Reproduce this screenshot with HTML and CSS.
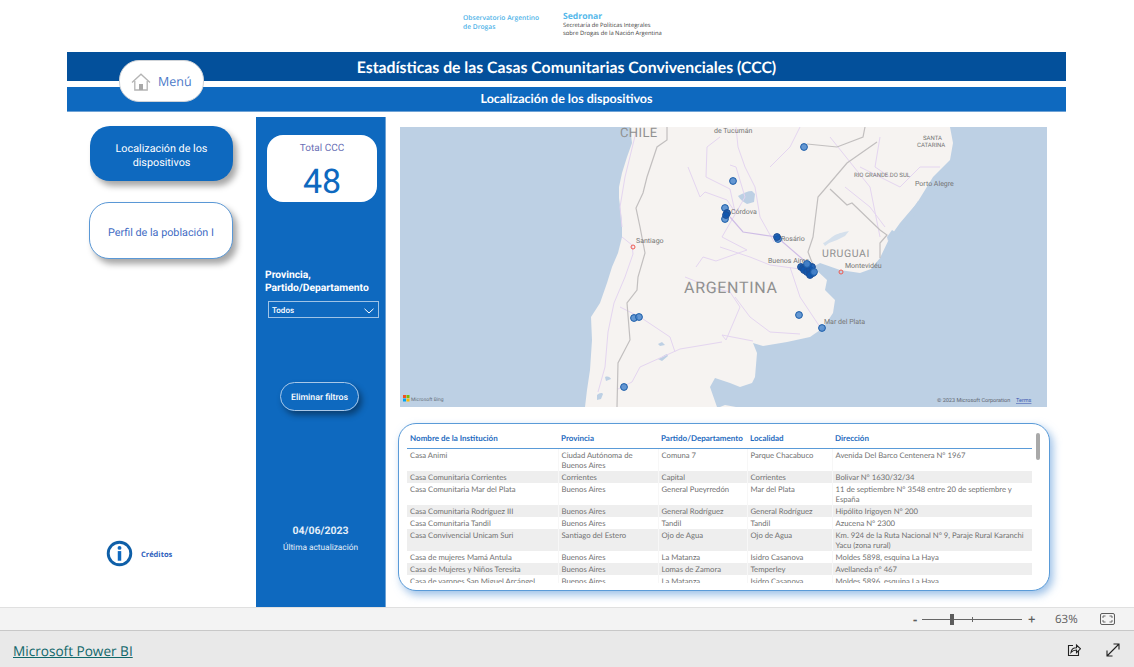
FILE: index.html
```html
<!DOCTYPE html>
<html lang="es">
<head>
<meta charset="utf-8">
<title>Estadísticas de las Casas Comunitarias Convivenciales (CCC)</title>
<link rel="stylesheet" href="styles.css">
</head>
<body>
<div class="page">
  <div class="canvas">
    <header class="logos">
      <div class="obs">Observatorio Argentino<br>de Drogas</div>
      <div class="sed">
        <div class="sed-name">Sedronar</div>
        <div class="sed-desc">Secretaría de Políticas Integrales<br>sobre Drogas de la Nación Argentina</div>
      </div>
    </header>
    <div class="title-bar">Estadísticas de las Casas Comunitarias Convivenciales (CCC)</div>
    <div class="sub-bar">Localización de los dispositivos</div>
    <a class="menu-btn">
      <svg class="home-icon" viewBox="0 0 20 18" width="20" height="18">
        <path d="M1 9.500 10 1.200l9 8.300" fill="none" stroke="#b4b4b4" stroke-width="1.300"/>
        <path d="M3.800 8v9h12.400V8" fill="none" stroke="#b4b4b4" stroke-width="1.300"/>
        <rect x="8" y="11" width="4" height="6" fill="#a8a8a8"/>
      </svg>
      <span>Menú</span>
    </a>
    <div class="main">
      <nav class="left">
        <div class="nav-btn active">Localización de los<br>dispositivos</div>
        <div class="nav-btn second">Perfil de la población I</div>
        <div class="credits">
          <svg viewBox="0 0 28 28" width="27" height="27">
            <circle cx="14" cy="14" r="11.700" fill="#fff" stroke="#0f5fa8" stroke-width="3"/>
            <circle cx="14" cy="8.200" r="2" fill="#0f69bf"/>
            <rect x="12.200" y="11.500" width="3.600" height="10" fill="#0f69bf"/>
          </svg>
          <span>Créditos</span>
        </div>
      </nav>
      <aside class="side">
        <div class="kpi">
          <div class="kpi-label">Total CCC</div>
          <div class="kpi-value">48</div>
        </div>
        <div class="slicer-label">Provincia,<br>Partido/Departamento</div>
        <div class="slicer">
          <span>Todos</span>
          <svg viewBox="0 0 10 6" width="10" height="6"><path d="M.5.800 5 5 9.500.800" fill="none" stroke="#fff" stroke-width="1"/></svg>
        </div>
        <div class="clear-btn">Eliminar filtros</div>
        <div class="date">04/06/2023</div>
        <div class="date-label">Última actualización</div>
      </aside>
      <section class="content">
        <div class="map">
          <svg viewBox="0 0 647 280" width="647" height="280">
            <rect width="647" height="280" fill="#bdd0e4"/>
            <path fill="#f6f3f1" d="M230 0 232 16 227 30 222 46 219 60 219 71 222 95 222 110 218 126 212 140 207 156 200 176 191 190 192 213 190 243 187 263 185 280 317 280 310 260 315 251 330 256 340 260 352 256 355 250 357 226 353 216 363 219 387 215 410 210 423 201 433 186 435 173 425 163 427 153 413 140 420 136 440 143 460 146 471 142 480 131 490 110 500 96 517 76 533 50 550 33 553 16 550 0Z"/>
            <path fill="#f6f3f1" d="M325 278 336 280 320 280Z"/>
            <g fill="#bdd0e4">
              <path d="M338 69c5-3 10-5 14-5l3 3-1 8-7 2c-4-2-7-5-9-8Z"/>
              <path d="M498 104c4-6 8-13 14-21l6-9 4 2-7 11-8 11-6 8Z"/>
              <path d="M487 110l5-7 3 2-5 7-2 2Z"/>
              <path d="M258 232c3-1 6-4 9-5l1 2-6 5Z"/>
              <path d="M205 250c3-1 5 0 6 2l-5 2Z"/>
              <path d="M197 268c2-2 5-3 6-1l-2 5-4 1Z"/>
              <path d="M258 217l4-2 3 3-5 1Z"/>
            </g>
            <g fill="#d5e0ec">
              <path d="M423 116c4-1 8-6 12-8 5-2 8-3 14-4l-4 5-8 4-8 3-4 3Z"/>
            </g>
            <g fill="none" stroke="#e4d5f0" stroke-width="1">
              <path d="M222 110 232 118 233 127 225 150 214 176 208 205 205 240 198 265"/>
              <path d="M236 5 225 50 220 80 222 100"/>
              <path d="M288 40 300 70 305 65 327 73 335 85 330 62 306 50 307 20 320 10"/>
              <path d="M330 38 336 40 345 70 322 110 347 123 316 134 303 130 296 140"/>
              <path d="M285 150 310 160 330 165 340 180 326 213 322 208 353 214"/>
              <path d="M322 215 280 222 240 240 232 255 218 262"/>
              <path d="M220 180 240 190 270 210 275 225"/>
              <path d="M320 120 350 130 370 138 400 142"/>
              <path d="M335 170 350 190 370 205 400 207"/>
              <path d="M390 140 400 170 420 200"/>
              <path d="M336 0 338 20 345 40 355 60 360 90 374 115"/>
              <path d="M400 0 390 20 370 40"/>
              <path d="M430 10 470 60 480 110"/>
              <path d="M460 40 500 60 520 40 540 40"/>
              <path d="M480 10 475 40 490 50"/>
              <path d="M445 60 470 80 485 100"/>
            </g>
            <path d="M330 90 343 105 377 110 407 136" fill="none" stroke="#cfbde6" stroke-width="1.200"/>
            <g fill="none" stroke="#c2bfbf" stroke-width="1.200">
              <path d="M267 0 267 13 257 20 247 50 243 66 236 81 240 100 245 126 238 150 237 163 227 176 230 213 218 236 217 280"/>
              <path d="M407 17 437 20 463 10 465 0"/>
              <path d="M477 15 447 36 430 56 418 70 413 110 408 125 413 138"/>
              <path d="M430 62 447 78 452 76 480 103 487 108 480 116 480 131"/>
            </g>
            <g fill="#909090">
              <text class="t-country" x="220" y="10">CHILE</text>
              <text class="t-country big" x="284" y="166">ARGENTINA</text>
              <text class="t-uru" x="422" y="130">URUGUAI</text>
            </g>
            <g fill="#757575">
              <text class="t-city" x="314" y="6">de Tucumán</text>
              <text class="t-city" x="236" y="116">Santiago</text>
              <text class="t-city" x="331" y="87">Córdova</text>
              <text class="t-city" x="381" y="114">Rosário</text>
              <text class="t-city" x="368" y="136">Buenos Aires</text>
              <text class="t-city" x="445" y="141">Montevidéu</text>
              <text class="t-city" x="424" y="197">Mar del Plata</text>
              <text class="t-city" x="515" y="59">Porto Alegre</text>
              <text class="t-state" x="454" y="50">RIO GRANDE DO SUL</text>
              <text class="t-state" x="523" y="13">SANTA</text>
              <text class="t-state" x="517" y="20">CATARINA</text>
            </g>
            <g fill="none" stroke="#ef5a50" stroke-width="1">
              <circle cx="233" cy="120" r="2"/>
              <circle cx="441" cy="145" r="2"/>
            </g>
            <g fill="#4a86cd" fill-opacity=".85" stroke="#1d5ea9">
              <circle cx="404" cy="20" r="3.400"/>
              <circle cx="333" cy="54" r="3.400"/>
              <circle cx="325" cy="81" r="3.400"/>
              <circle cx="325" cy="92" r="3.400"/>
              <circle cx="378" cy="112" r="3.400"/>
              <circle cx="399" cy="188" r="3.400"/>
              <circle cx="422" cy="201" r="3.400"/>
              <circle cx="234" cy="191" r="3.400"/>
              <circle cx="239" cy="190" r="3.400"/>
              <circle cx="224" cy="260" r="3.400"/>
            </g>
            <g fill="#0f55ad" fill-opacity=".9" stroke="#1d4e95">
              <circle cx="327" cy="86" r="3.400"/>
              <circle cx="326" cy="88" r="3.400"/>
              <circle cx="377" cy="110" r="3.400"/>
              <circle cx="401" cy="140" r="3.400"/>
              <circle cx="403" cy="141" r="3.400"/>
              <circle cx="406" cy="140" r="3.400"/>
              <circle cx="408" cy="138" r="3.400"/>
              <circle cx="404" cy="143" r="3.400"/>
              <circle cx="407" cy="145" r="3.400"/>
              <circle cx="410" cy="143" r="3.400"/>
              <circle cx="412" cy="140" r="3.400"/>
              <circle cx="410" cy="147" r="3.400"/>
              <circle cx="413" cy="146" r="3.400"/>
              <circle cx="410" cy="148" r="3.400"/>
            </g>
            <g fill="#4a86cd" fill-opacity=".85" stroke="#1d5ea9">
              <circle cx="407" cy="137" r="3.400"/>
              <circle cx="414" cy="145" r="3.400"/>
            </g>
            <g>
              <rect x="3" y="268" width="3" height="3" fill="#f25022"/>
              <rect x="6.500" y="268" width="3" height="3" fill="#7fba00"/>
              <rect x="3" y="271.500" width="3" height="3" fill="#00a4ef"/>
              <rect x="6.500" y="271.500" width="3" height="3" fill="#ffb900"/>
              <text class="t-attr small" x="11" y="273.500" fill="#6b7480">Microsoft Bing</text>
              <text class="t-attr" x="537" y="275" fill="#5f6670">© 2023 Microsoft Corporation</text>
              <text class="t-attr terms" x="616" y="275" fill="#3a55b0">Terms</text>
            </g>
          </svg>
        </div>
        <div class="table-panel">
          <div class="scroll-thumb"></div>
          <div class="table-clip">
            <table class="data">
              <thead>
                <tr>
                  <th class="c1">Nombre de la Institución</th>
                  <th class="c2">Provincia</th>
                  <th class="c3">Partido/Departamento</th>
                  <th class="c4">Localidad</th>
                  <th class="c5">Dirección</th>
                </tr>
              </thead>
              <tbody>
                <tr><td>Casa Animi</td><td>Ciudad Autónoma de Buenos Aires</td><td>Comuna 7</td><td>Parque Chacabuco</td><td>Avenida Del Barco Centenera N° 1967</td></tr>
                <tr><td>Casa Comunitaria Corrientes</td><td>Corrientes</td><td>Capital</td><td>Corrientes</td><td>Bolivar N° 1630/32/34</td></tr>
                <tr><td>Casa Comunitaria Mar del Plata</td><td>Buenos Aires</td><td>General Pueyrredón</td><td>Mar del Plata</td><td>11 de septiembre N° 3548 entre 20 de septiembre y España</td></tr>
                <tr><td>Casa Comunitaria Rodríguez III</td><td>Buenos Aires</td><td>General Rodríguez</td><td>General Rodríguez</td><td>Hipólito Irigoyen N° 200</td></tr>
                <tr><td>Casa Comunitaria Tandil</td><td>Buenos Aires</td><td>Tandil</td><td>Tandil</td><td>Azucena N° 2300</td></tr>
                <tr><td>Casa Convivencial Unicam Suri</td><td>Santiago del Estero</td><td>Ojo de Agua</td><td>Ojo de Agua</td><td>Km. 924 de la Ruta Nacional N° 9, Paraje Rural Karanchi Yacu (zona rural)</td></tr>
                <tr><td>Casa de mujeres Mamá Antula</td><td>Buenos Aires</td><td>La Matanza</td><td>Isidro Casanova</td><td>Moldes 5898, esquina La Haya</td></tr>
                <tr><td>Casa de Mujeres y Niños Teresita</td><td>Buenos Aires</td><td>Lomas de Zamora</td><td>Temperley</td><td>Avellaneda n° 467</td></tr>
                <tr><td>Casa de varones San Miguel Arcángel</td><td>Buenos Aires</td><td>La Matanza</td><td>Isidro Casanova</td><td>Moldes 5896, esquina La Haya</td></tr>
              </tbody>
            </table>
          </div>
        </div>
      </section>
    </div>
  </div>
  <div class="status">
    <span class="zoom-sign">-</span>
    <div class="zoom-track"><i class="zoom-tick"></i><i class="zoom-thumb"></i></div>
    <span class="zoom-plus">+</span>
    <span class="zoom-pct">63%</span>
    <svg class="fit" viewBox="0 0 15 12" width="15" height="12">
      <rect x=".5" y=".5" width="14" height="11" rx="1.500" fill="none" stroke="#5c5c5c"/>
      <path d="M3 5V3h2.500M12 5V3H9.500M3 7v2h2.500M12 7v2H9.500" fill="none" stroke="#5c5c5c" stroke-width=".9"/>
    </svg>
  </div>
  <footer class="footer">
    <a class="brand">Microsoft Power BI</a>
    <div class="foot-icons">
      <svg viewBox="0 0 14 14" width="14" height="14">
        <path d="M6 2.500H1.500v10h10V8" fill="none" stroke="#222" stroke-width="1.100"/>
        <path d="M4 9.500c.3-3 2.500-4.800 5.500-4.800V2l4 3.800-4 3.800V7C7.500 7 5.500 7.800 4 9.500Z" fill="none" stroke="#222" stroke-width="1.100"/>
      </svg>
      <svg viewBox="0 0 14 14" width="14" height="14">
        <path d="M1 13 13 1M7.500 1H13v5.500M1 7.500V13h5.500" fill="none" stroke="#222" stroke-width="1.100"/>
      </svg>
    </div>
  </footer>
</div>
</body>
</html>
```
FILE: styles.css
```css
* { box-sizing: border-box; }
html, body { margin: 0; height: 100%; overflow: hidden; background: #fff; }
body { font-family: "Open Sans", "Liberation Sans", sans-serif; text-rendering: geometricPrecision; }

.page { width: 1134px; height: 667px; display: flex; flex-direction: column; }
.canvas { position: relative; height: 607px; padding: 0 68px 0 67px; }

.logos { height: 52px; display: flex; padding-left: 396px; }
.obs { margin-top: 14px; width: 100px; font-size: 6.700px; line-height: 8.500px; color: #4fb3e8; font-weight: 600; }
.sed { margin-top: 11px; }
.sed-name { font-size: 8.600px; line-height: 10px; font-weight: 700; color: #55b8ea; }
.sed-desc { margin-top: 1px; font-size: 5.800px; line-height: 7.500px; color: #3c3c3c; }

.title-bar {
  height: 29px; background: #03509b; color: #fff; text-align: center;
  font-family: "Lato", sans-serif; font-size: 15.800px; line-height: 31px; font-weight: 700;
}
.sub-bar {
  height: 25px; margin-top: 6px; background: #0e69bf; color: #fff; text-align: center;
  font-family: "Lato", sans-serif; font-size: 12.500px; line-height: 24px; font-weight: 700; border-bottom: 1px solid #6fa3d6;
}
.menu-btn {
  position: absolute; left: 119px; top: 60px; width: 85px; height: 42px;
  display: flex; align-items: center; gap: 7px; padding: 1px 0 0 11px;
  background: #fff; border: 1px solid #cfd3d8; border-radius: 20px;
  color: #4a78c8; font-size: 12.500px;
}

.main { display: grid; grid-template-columns: 189px 130px 1fr; height: 490px; margin-top: 5px; }

.left { display: flex; flex-direction: column; padding: 9px 0 40px 22px; font-family: "Roboto", sans-serif; }
.nav-btn {
  width: 144px; display: flex; align-items: center; justify-content: center; text-align: center;
  border-radius: 20px; padding-top: 4px; font-size: 10.800px; line-height: 14px; box-shadow: 4px 5px 6px rgba(0,0,0,.35);
}
.nav-btn.active { height: 55px; background: #0e69bf; color: #fff; margin-left: 1px; width: 143px; }
.nav-btn.second { height: 57px; margin-top: 21px; background: #fff; color: #3f6cc4; border: 1px solid #5a98d6; }
.credits { margin-top: auto; margin-left: 17px; display: flex; align-items: center; gap: 8px; font-family: "Open Sans", sans-serif; font-size: 7.500px; font-weight: 700; color: #2f62bd; }
.credits span { padding-top: 2px; }

.side { background: #0e69bf; border-right: 1px solid #6fa3d6; display: flex; flex-direction: column; color: #fff; font-family: "Roboto", sans-serif; }
.kpi {
  width: 110px; height: 67px; margin: 18px 0 0 11px; background: #fff; border-radius: 16px;
  text-align: center; color: #0e69bf;
}
.kpi-label { font-size: 10px; line-height: 14px; padding-top: 7px; color: #6a6fb5; }
.kpi-value { font-size: 34px; line-height: 40px; margin-top: 6px; }
.slicer-label { margin: 67px 0 0 9px; font-size: 10.300px; line-height: 12.500px; font-weight: 700; white-space: nowrap; }
.slicer {
  width: 111px; height: 17px; margin: 7px 0 0 12px; padding: 2px 4px 0 3px;
  border: 1px solid #9fc3e6; display: flex; align-items: center; justify-content: space-between;
  font-size: 8px; font-weight: 500;
}
.clear-btn {
  width: 79px; height: 29px; margin: 64px 0 0 24px; border: 1px solid #a9c8e8; border-radius: 15px;
  text-align: center; font-size: 8.800px; line-height: 31px; font-weight: 500; box-shadow: 3px 4px 6px rgba(0,0,0,.4);
}
.date { margin-top: 113px; text-align: center; font-size: 10.500px; line-height: 14px; font-weight: 700; color: #e4eef8; }
.date-label { margin-top: 5px; text-align: center; font-size: 8.300px; line-height: 11px; color: #e4eef8; }

.content { padding: 10px 0 0 14px; }
.map { width: 647px; height: 280px; }
.map svg { display: block; }
.t-country { font-family: "Roboto", sans-serif; font-size: 13px; letter-spacing: .4px; }
.t-country.big { font-size: 16px; letter-spacing: .7px; }
.t-uru { font-family: "Roboto", sans-serif; font-size: 10.500px; letter-spacing: .6px; }
.t-city { font-family: "Roboto", sans-serif; font-size: 7px; }
.t-state { font-family: "Roboto", sans-serif; font-size: 6px; }
.t-attr { font-family: "Roboto", sans-serif; font-size: 5.500px; }
.t-attr.small { font-size: 5px; }
.terms { text-decoration: underline; }

.table-panel {
  position: relative; width: 652px; height: 168px; margin: 16px 0 0 -2px; padding: 8px 17px 9px 8px;
  background: #fff; border: 1px solid #5a9bd8; border-radius: 18px; box-shadow: 3px 4px 8px rgba(90,150,215,.6);
}
.scroll-thumb { position: absolute; right: 9px; top: 9px; width: 4px; height: 27px; border-radius: 2px; background: #a9a9a9; }
.table-clip { height: 151px; overflow: hidden; }
.data { width: 626px; table-layout: fixed; border-collapse: collapse; font-family: "Lato", sans-serif; font-size: 7.700px; line-height: 10px; color: #707070; }
.data th {
  height: 16px; padding: 0 3px 5px; text-align: left; vertical-align: bottom;
  color: #1f6cc0; font-weight: 700; font-size: 8px; border-bottom: 1px solid #5a9bd8; white-space: nowrap;
}
.data td { padding: 1px 3px; vertical-align: top; border-right: 1px solid #f7f7f7; }
.data tbody tr:nth-child(even) { background: #eeeeee; }
.c1 { width: 151px; }
.c2 { width: 100px; }
.c3 { width: 89px; }
.c4 { width: 85px; }

.status {
  height: 23px; background: #f3f3f3; border-top: 1px solid #e0e0e0;
  display: flex; align-items: center; justify-content: flex-end; padding-right: 19px; color: #5c5c5c;
}
.zoom-sign { font-size: 13px; font-weight: 700; width: 9px; }
.zoom-track { position: relative; width: 100px; height: 1px; background: #666; }
.zoom-tick { position: absolute; left: 50px; top: -2px; width: 1px; height: 5px; background: #666; }
.zoom-thumb { position: absolute; left: 28px; top: -5px; width: 4px; height: 11px; background: #5c5c5c; }
.zoom-plus { font-size: 13px; font-weight: 600; width: 12px; margin-left: 6px; }
.zoom-pct { font-size: 11.500px; margin-left: 15px; width: 23px; }
.fit { margin-left: 22px; }

.footer {
  flex: 1; background: #e9e9e9; border-top: 1px solid #c8c8c8;
  display: flex; align-items: center; justify-content: space-between; padding: 1px 14px 0 13px;
}
.brand { padding-top: 2px; font-size: 13.600px; font-weight: 500; color: #10676a; text-decoration: underline; }
.foot-icons { display: flex; gap: 25px; }
.foot-icons svg { display: block; }
```
